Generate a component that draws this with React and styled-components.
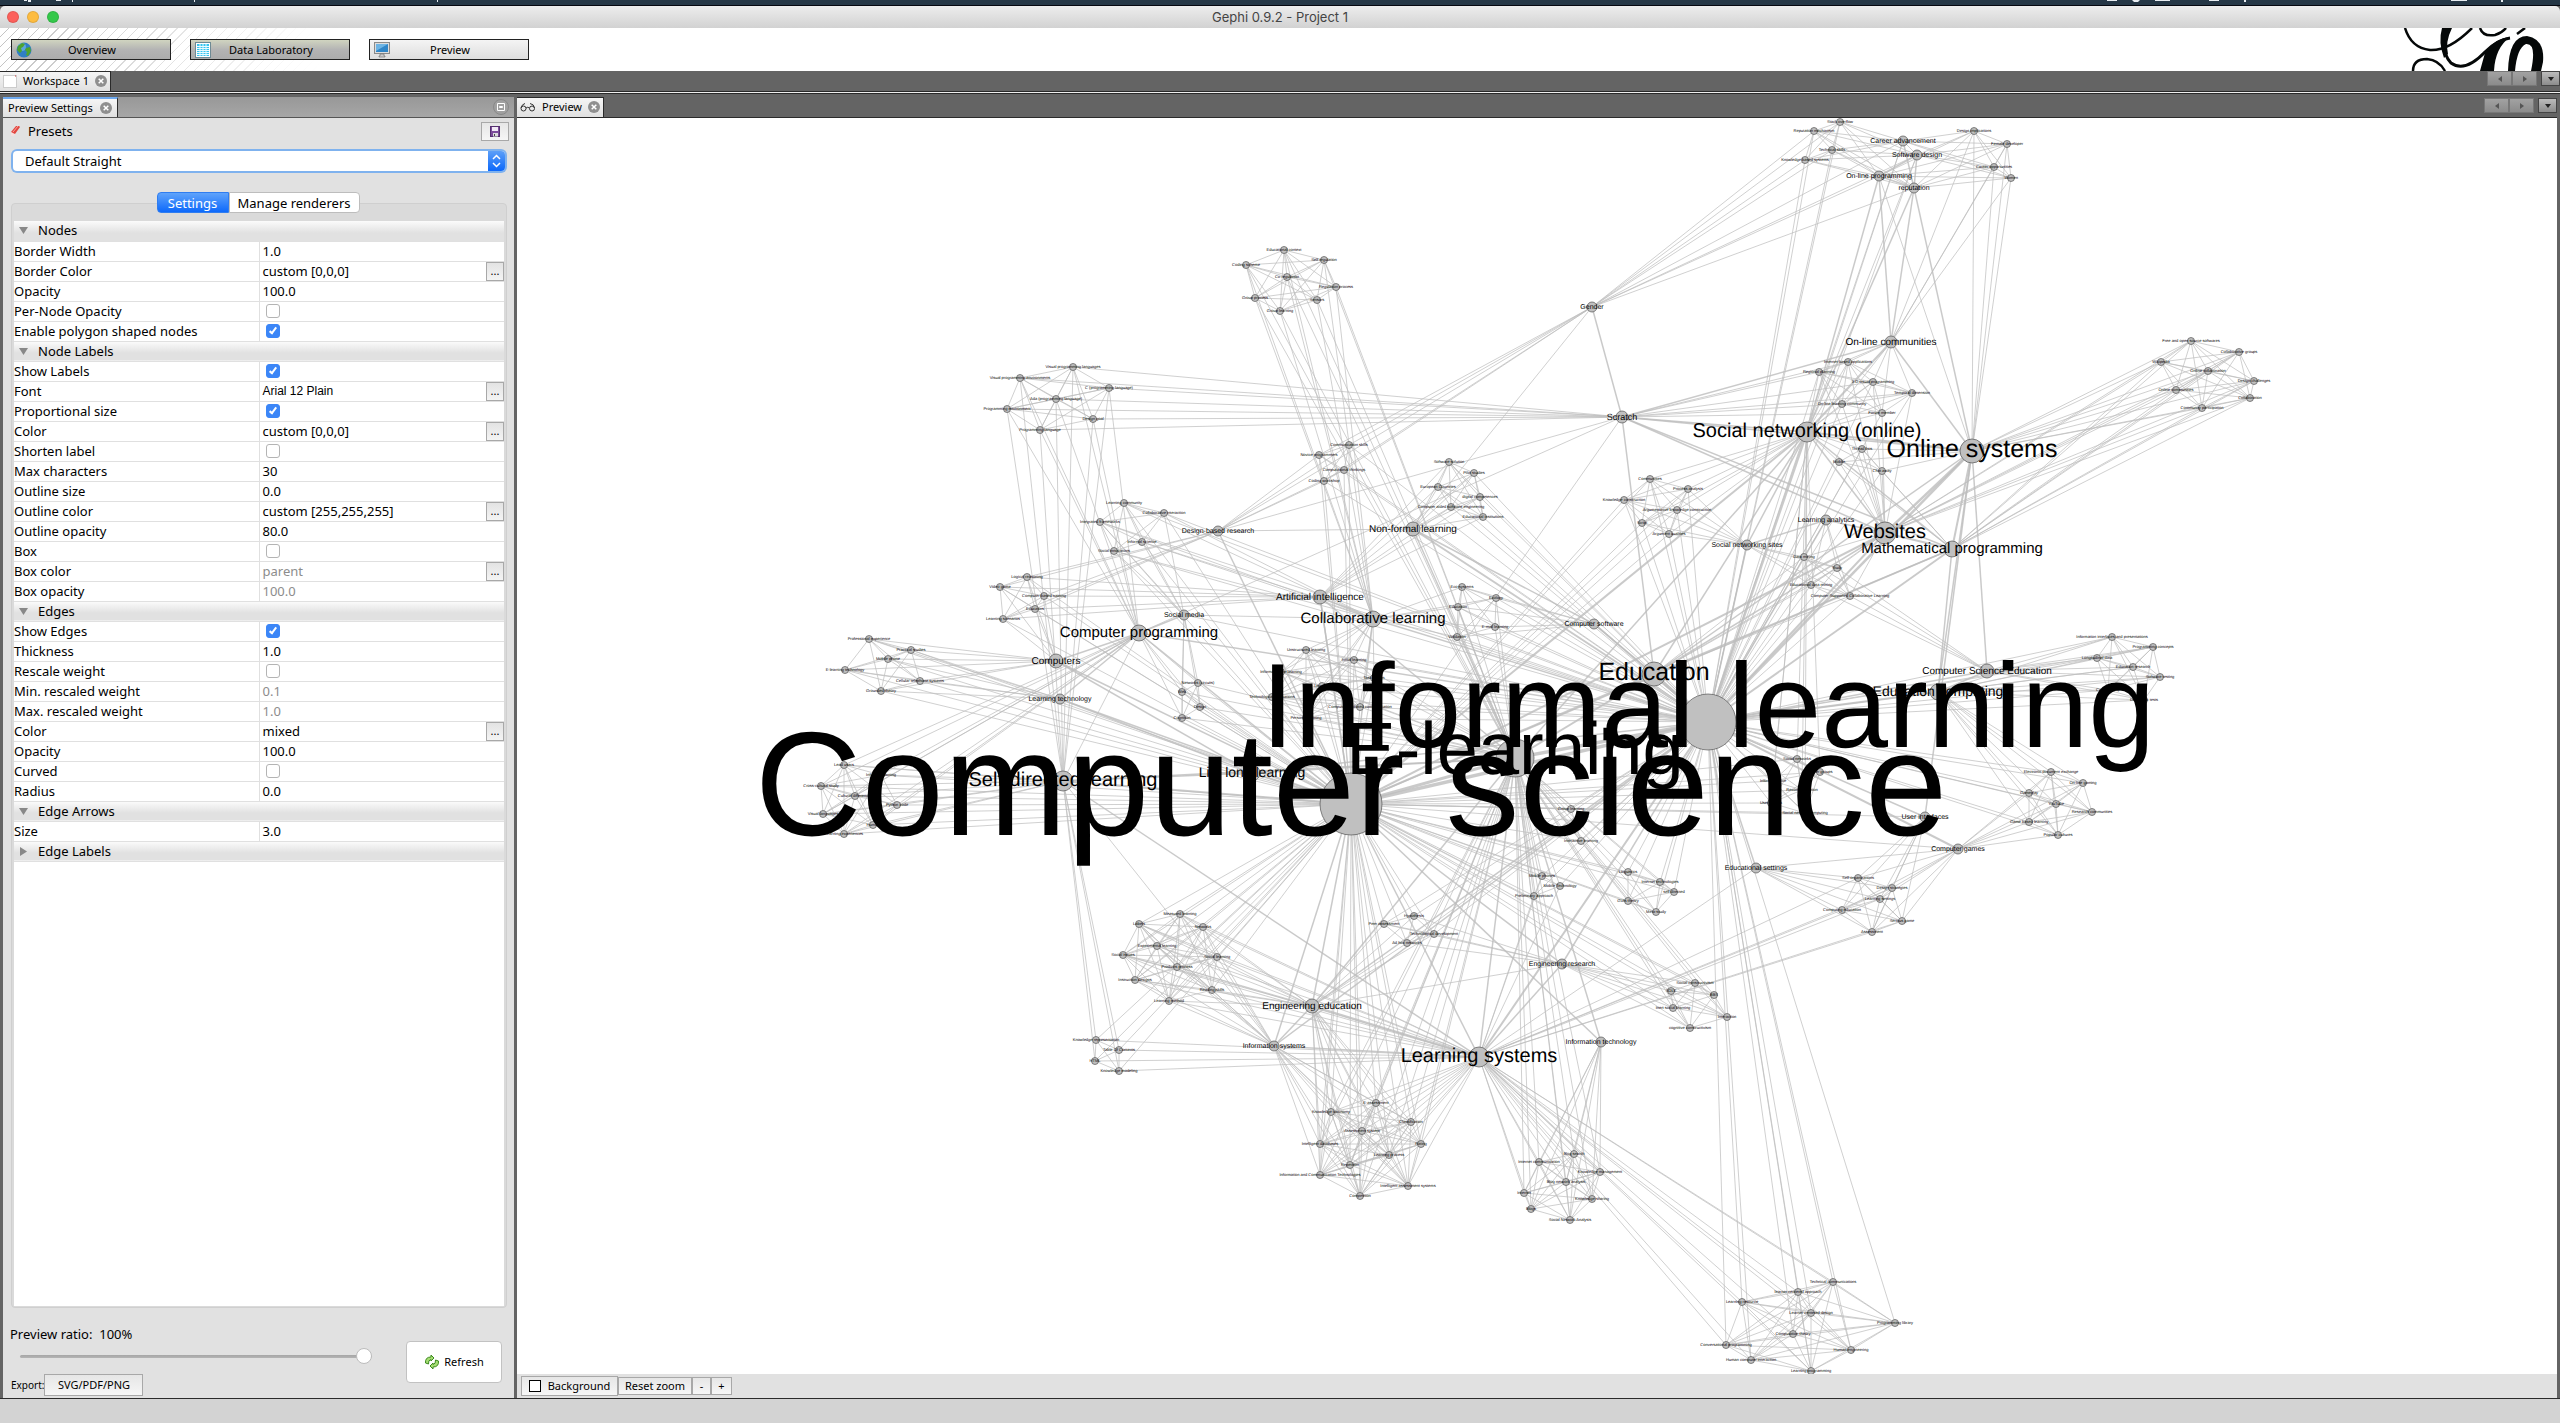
import React, { useState } from "react";
import styled, { createGlobalStyle, css } from "styled-components";

const UI = `"Noto Sans", "Open Sans", sans-serif`;

const GlobalStyle = createGlobalStyle`
  *, *::before, *::after { box-sizing: border-box; }
  body { margin: 0; background: #253746; }
  button, input, select { font: inherit; color: inherit; margin: 0; }
`;

/* ---------- window frame ---------- */

const Window = styled.div`
  display: flex;
  flex-direction: column;
  height: 100vh;
  overflow: hidden;
  font-family: ${UI};
  font-size: 13px;
  line-height: 20px;
  color: #000;
  background: #646464;
`;

const MenuStrip = styled.div`
  flex: none;
  height: 6px;
  background: #253746;
  border-bottom: 1px solid #05070f;
  svg { display: block; width: 100%; height: 5px; }
`;

const TitleBar = styled.header`
  flex: none;
  display: grid;
  grid-template-columns: 1fr auto 1fr;
  align-items: center;
  height: 22px;
  padding: 0 7px;
  background: linear-gradient(#ededed, #d2d2d2);
  border-radius: 5px 5px 0 0;
`;

const Lights = styled.div`
  display: flex;
  gap: 8px;
`;

const Light = styled.button`
  width: 12px;
  height: 12px;
  padding: 0;
  border: 1px solid rgba(0, 0, 0, 0.1);
  border-radius: 50%;
  background: ${(p) => p.$color};
`;

const Title = styled.h1`
  margin: 0;
  font-family: Inter, sans-serif;
  font-size: 13px;
  font-weight: 400;
  line-height: 20px;
  color: #444;
`;

const Banner = styled.nav`
  flex: none;
  display: flex;
  gap: 19px;
  align-items: center;
  height: 43px;
  padding-left: 11px;
  background:
    linear-gradient(90deg, rgba(255, 255, 255, 0) 0, #fff 320px),
    repeating-linear-gradient(135deg, #fff 0 6px, #c4c4c4 6px 7px);
`;

const ModeButton = styled.button`
  display: grid;
  grid-template-columns: 16px 1fr 14px;
  align-items: center;
  width: 160px;
  height: 21px;
  padding: 0 4px;
  border: 1px solid #222;
  background: ${(p) => (p.$active ? "linear-gradient(#f4f4f4, #dedede)" : "linear-gradient(#d0d4c0, #b4b4b4 50%, #acacac)")};
  font-size: 11px;
  line-height: 18px;
  svg { width: 16px; height: 16px; display: block; }
`;

const Logo = styled.svg`
  width: 142px;
  height: 43px;
  margin-left: auto;
  margin-right: 15px;
`;

const Strip = styled.div`
  flex: none;
  display: flex;
  align-items: flex-start;
  justify-content: space-between;
  height: ${(p) => p.$height}px;
  padding-right: ${(p) => p.$right || 0}px;
  background: #646464;
  border-bottom: 1px solid #2a2a2a;
`;

const Groove = styled.div`
  flex: none;
  height: 5px;
  border-top: 1px solid #f0f0f0;
  background: linear-gradient(#2a2a2a 0 1px, #646464 1px);
`;

const Tab = styled.div`
  display: flex;
  align-items: center;
  gap: ${(p) => p.$gap || 4}px;
  height: 20px;
  padding: 0 ${(p) => p.$pad || 4}px 1px;
  border: 1px solid #2a2a2a;
  border-width: 1px 1px 0 0;
  background: linear-gradient(#f5f5f5, #e0e0e0);
  font-size: 11px;
  line-height: 16px;
  white-space: nowrap;
  ${(p) => p.$focused && css`border-top: 2px solid #6ea9ee;`}
  svg { flex: none; }
`;

const CloseButton = styled.button`
  flex: none;
  display: grid;
  place-items: center;
  width: 12px;
  height: 12px;
  padding: 0;
  border: 0;
  border-radius: 50%;
  background: #8f8f8f;
`;

const Pager = styled.div`
  display: flex;
  padding-top: ${(p) => p.$top || 0}px;
`;

const PagerButton = styled.button`
  display: grid;
  place-items: center;
  width: ${(p) => (p.$menu ? 19 : 25)}px;
  height: 15px;
  padding: 0;
  margin-left: ${(p) => (p.$menu ? 4 : 0)}px;
  border: 1px solid ${(p) => (p.$menu ? "#444" : "#777")};
  background: ${(p) => (p.$menu ? "linear-gradient(#bcbcbc, #8c8c8c)" : "linear-gradient(#a2a2a2, #8b8b8b)")};
`;

const Workspace = styled.main`
  flex: 1;
  min-height: 0;
  display: grid;
  grid-template-columns: 511px minmax(0, 1fr);
  gap: 3px;
  padding: 0 3px;
`;

const StatusBar = styled.footer`
  flex: none;
  height: 25px;
  border-top: 1px solid #2a2a2a;
  background: #d3d3d3;
`;

/* ---------- settings panel ---------- */

const Panel = styled.section`
  display: flex;
  flex-direction: column;
  min-width: 0;
  min-height: 0;
  background: #e1e1e1;
`;

const PanelHeader = styled(Strip)`
  background: linear-gradient(#989898, #a6a6a6);
  border-bottom-color: #555;
  align-items: center;
`;

const MinimizeButton = styled.button`
  display: grid;
  place-items: center;
  width: 16px;
  height: 16px;
  padding: 0;
  border: 1px solid #888;
  border-radius: 50%;
  background: #a0a0a0;
`;

const PresetRow = styled.div`
  display: flex;
  align-items: center;
  height: 25px;
  gap: 7px;
  padding: 1px 5px 0 7px;
`;

const PresetTitle = styled.h2`
  flex: 1;
  margin: 0;
  font-size: 13px;
  font-weight: 400;
`;

const FlatButton = styled.button`
  display: flex;
  align-items: center;
  justify-content: center;
  gap: 7px;
  height: ${(p) => p.$height}px;
  min-width: ${(p) => p.$width}px;
  padding: 0 ${(p) => p.$pad || 0}px;
  border: 1px solid #a8a8a8;
  background: linear-gradient(#e6e6e6, #f6f6f6);
  font-size: 11px;
  line-height: 16px;
  white-space: nowrap;
`;

const SelectBox = styled.div`
  position: relative;
  margin: 8px 9px 0 10px;
  height: 20px;
  border-radius: 4px;
  box-shadow: 0 0 0 2px #7fb2ee;
  background: #fff;
  select {
    width: 100%;
    height: 20px;
    padding: 0 24px 0 12px;
    border: 0;
    border-radius: 4px;
    outline: 0;
    appearance: none;
    background: transparent;
  }
  svg {
    position: absolute;
    top: 0;
    right: 0;
    pointer-events: none;
  }
`;

const TabBox = styled.div`
  flex: 1;
  min-height: 0;
  display: flex;
  flex-direction: column;
  margin: 21px 7px 0 8px;
`;

const Segments = styled.div`
  display: flex;
  justify-content: center;
  position: relative;
  z-index: 1;
  padding-right: 2px;
  margin-bottom: -10px;
`;

const Segment = styled.button`
  height: 21px;
  width: ${(p) => p.$width}px;
  padding: 0;
  border: 1px solid ${(p) => (p.$active ? "#2f7df0" : "#bdbdbd")};
  border-radius: ${(p) => (p.$active ? "4px 0 0 4px" : "0 4px 4px 0")};
  background: ${(p) => (p.$active ? "linear-gradient(#5fa3fb, #0d69fb)" : "#fff")};
  color: ${(p) => (p.$active ? "#fff" : "#000")};
  line-height: 18px;
`;

const Sheet = styled.div`
  flex: 1;
  min-height: 0;
  padding: 17px 2px 1px;
  border: 1px solid #cfcfcf;
  border-radius: 4px;
  background: #dadada;
  display: flex;
`;

const SheetBody = styled.div`
  flex: 1;
  background: #fff;
`;

const Properties = styled.table`
  width: 100%;
  table-layout: fixed;
  border-collapse: collapse;
  th, td {
    height: 20px;
    padding: 0;
    font-weight: 400;
    text-align: left;
    line-height: 19px;
    border-bottom: 1px solid #e0e0e0;
    white-space: nowrap;
  }
`;

const GroupCell = styled.th`
  background: linear-gradient(#fbfbfb, #e1e1e1 60%);
  div { display: flex; align-items: center; gap: 10px; padding-left: 5px; height: 19px; }
`;

const ValueCell = styled.td`
  border-left: 1px solid #e0e0e0;
  color: ${(p) => (p.$muted ? "#8c8c8c" : "#000")};
  font-family: ${(p) => (p.$arial ? `"Liberation Sans", Arial, sans-serif` : UI)};
  font-size: ${(p) => (p.$arial ? 12 : 13)}px;
  > div {
    display: flex;
    align-items: center;
    justify-content: space-between;
    height: 19px;
    padding-left: 3px;
  }
`;

const MoreButton = styled.button`
  width: 18px;
  height: 19px;
  padding: 0;
  border: 1px solid #a8a8a8;
  background: linear-gradient(#e3e3e3, #f4f4f4);
  font-family: ${UI};
  font-size: 11px;
  line-height: 16px;
  color: #000;
`;

const Check = styled.input`
  appearance: none;
  width: 14px;
  height: 14px;
  margin-left: 3px;
  border: 1px solid #b4b4b4;
  border-radius: 3px;
  background: #fff;
  &:checked {
    border-color: #3b86f7;
    background: #3b86f7;
  }
  &:checked::after {
    content: "";
    display: block;
    width: 4px;
    height: 8px;
    margin: 1px auto 0;
    border: solid #fff;
    border-width: 0 2px 2px 0;
    transform: rotate(38deg);
  }
`;

const Footer = styled.div`
  flex: none;
  display: grid;
  grid-template-columns: minmax(0, 1fr) 96px;
  padding: 15px 12px 0 7px;
  height: 90px;
`;

const FooterLeft = styled.div`
  display: flex;
  flex-direction: column;
  label { line-height: 22px; }
`;

const Ratio = styled.input`
  appearance: none;
  width: 352px;
  height: 16px;
  margin: 3px 0 0 10px;
  background: transparent;
  &::-webkit-slider-runnable-track {
    height: 3px;
    border-radius: 2px;
    background: linear-gradient(#a6a6a6, #b4b4b4);
  }
  &::-webkit-slider-thumb {
    appearance: none;
    width: 16px;
    height: 16px;
    margin-top: -7px;
    border: 1px solid #bcbcbc;
    border-radius: 50%;
    background: #fff;
  }
`;

const ExportRow = styled.div`
  display: flex;
  align-items: center;
  margin-top: 10px;
  padding-left: 1px;
  font-size: 10px;
`;

const RefreshButton = styled.button`
  display: flex;
  align-items: center;
  justify-content: center;
  gap: 4px;
  height: 42px;
  margin-top: 18px;
  padding: 0;
  border: 1px solid #c2c2c2;
  border-radius: 4px;
  background: #fff;
  font-size: 11px;
`;

/* ---------- preview panel ---------- */

const Canvas = styled.div`
  flex: 1;
  min-height: 0;
  background: #fff;
  svg { display: block; width: 100%; height: 100%; }
  text {
    font-family: "Liberation Sans", Arial, sans-serif;
    text-anchor: middle;
    text-rendering: geometricPrecision;
  }
`;

const CanvasTools = styled.div`
  flex: none;
  display: flex;
  align-items: center;
  height: 24px;
  padding-left: 4px;
`;

const Swatch = styled.span`
  width: 12px;
  height: 12px;
  border: 1px solid #000;
  background: #fff;
`;

/* ---------- icons ---------- */

const Globe = () => (
  <svg viewBox="0 0 16 16">
    <circle cx="8" cy="8" r="7.5" fill="#2f7fc4" />
    <circle cx="6" cy="5" r="4" fill="#7cc0ee" opacity=".6" />
    <path d="M2 4l4-3 3 1-2 3-2 1 1 3-2 2-3-3zM10 6l4-1 1 4-3 5-2-1 1-3-2-2z" fill="#4ea32f" />
  </svg>
);
const Grid = () => (
  <svg viewBox="0 0 16 16">
    <rect x=".5" y=".5" width="15" height="15" fill="#fff" stroke="#6e8a94" />
    <rect x="2" y="2" width="12" height="12" fill="#35c4ee" />
    <path d="M2 4.500h12M2 6.500h12M2 8.500h12M2 10.500h12M2 12.500h12M5 2v12M8 2v12M11 2v12" stroke="#e9fbff" strokeWidth="1" />
  </svg>
);
const Monitor = () => (
  <svg viewBox="0 0 16 16">
    <rect x=".5" y=".5" width="15" height="11" fill="#ddd" stroke="#8a8a8a" />
    <rect x="2" y="2" width="12" height="8" fill="#2f86c8" />
    <path d="M2 2h12L2 9z" fill="#6db4e4" />
    <path d="M6 12h4v2h1v1H5v-1h1z" fill="#ccc" stroke="#777" strokeWidth=".7" />
  </svg>
);
const Cross = () => (
  <svg width="6" height="6" viewBox="0 0 6 6"><path d="M.7.7l4.600 4.600M5.300.7L.7 5.300" stroke="#fff" strokeWidth="1.500" /></svg>
);
const Arrow = ({ dir, fill = "#555" }) => (
  <svg width="6" height="6" viewBox="0 0 6 6">
    <path d={{ left: "M5 0v6L1 3z", right: "M1 0v6l4-3z", down: "M0 1h6L3 5z" }[dir]} fill={fill} />
  </svg>
);
const Twisty = ({ open }) => (
  <svg width="9" height="9" viewBox="0 0 9 9"><path d={open ? "M0 1h9L4.500 8z" : "M1 0v9l7-4.500z"} fill="#888" /></svg>
);
const Glasses = () => (
  <svg width="16" height="10" viewBox="0 0 16 10" fill="none" stroke="#333">
    <circle cx="3.500" cy="6.500" r="2.500" /><circle cx="12" cy="6.500" r="2.500" />
    <path d="M6 6q1.700-1.500 3.500 0M1 6Q2 2 5 1.500M14.500 6Q14 2 10 1.500" />
  </svg>
);
const Eraser = () => (
  <svg width="11" height="12" viewBox="0 0 11 12">
    <path d="M1 7l5-6h3l1 1-5 7H2z" fill="#e2463f" /><path d="M3 7l5-6" stroke="#f7a49e" /><path d="M1 7l4 2-1 2H1z" fill="#f5dede" />
  </svg>
);
const Floppy = () => (
  <svg width="10" height="11" viewBox="0 0 10 11">
    <rect x=".5" y=".5" width="9" height="10" fill="#7c4c9b" stroke="#54306e" />
    <rect x="2" y="1" width="6" height="4" fill="#f2eaf6" /><rect x="3" y="7" width="5" height="3.500" fill="#ddd" /><rect x="4" y="8" width="1" height="2" fill="#444" />
  </svg>
);
const RefreshIcon = () => (
  <svg width="16" height="16" viewBox="0 0 16 16" fill="#a5dd72" stroke="#3c8a1e">
    <path d="M7 1l3 3-3 3V5.500Q4 6 4.500 10L1.500 9Q1 3 7 3z" /><path d="M9 15l-3-3 3-3v1.500q3-.5 2.500-4.500l3 1q.5 6-5.500 6z" />
  </svg>
);
const Stepper = () => (
  <svg width="17" height="20" viewBox="0 0 17 20">
    <defs><linearGradient id="stepper" x2="0" y2="1"><stop stopColor="#5c9ff8" /><stop offset="1" stopColor="#0c68fa" /></linearGradient></defs>
    <path d="M0 0h13q4 0 4 4v12q0 4-4 4H0z" fill="url(#stepper)" />
    <path d="M5 8l3.500-3.500L12 8M5 12l3.500 3.500L12 12" fill="none" stroke="#fff" strokeWidth="1.500" />
  </svg>
);

/* ---------- property data ---------- */

const groups = [
  ["Nodes", true, [
    ["Border Width", "1.0"],
    ["Border Color", "custom [0,0,0]", "more"],
    ["Opacity", "100.0"],
    ["Per-Node Opacity", false],
    ["Enable polygon shaped nodes", true],
  ]],
  ["Node Labels", true, [
    ["Show Labels", true],
    ["Font", "Arial 12 Plain", "more", "arial"],
    ["Proportional size", true],
    ["Color", "custom [0,0,0]", "more"],
    ["Shorten label", false],
    ["Max characters", "30"],
    ["Outline size", "0.0"],
    ["Outline color", "custom [255,255,255]", "more"],
    ["Outline opacity", "80.0"],
    ["Box", false],
    ["Box color", "parent", "more", "muted"],
    ["Box opacity", "100.0", "", "muted"],
  ]],
  ["Edges", true, [
    ["Show Edges", true],
    ["Thickness", "1.0"],
    ["Rescale weight", false],
    ["Min. rescaled weight", "0.1", "", "muted"],
    ["Max. rescaled weight", "1.0", "", "muted"],
    ["Color", "mixed", "more"],
    ["Opacity", "100.0"],
    ["Curved", false],
    ["Radius", "0.0"],
  ]],
  ["Edge Arrows", true, [["Size", "3.0"]]],
  ["Edge Labels", false, []],
];

/* ---------- graph data ---------- */

// id: [label, x, y, radius, font size]
const hubs = {
  career: ["Career advancement", 1903, 141, 5, 7],
  swd: ["Software design", 1917, 155, 5, 7],
  olp: ["On-line programming", 1879, 176, 5, 7],
  rep: ["reputation", 1914, 188, 5, 7],
  gender: ["Gender", 1592, 307, 5, 7],
  scratch: ["Scratch", 1622, 417, 6, 9],
  comm: ["On-line communities", 1891, 342, 6, 10],
  sno: ["Social networking (online)", 1807, 432, 10, 20],
  os: ["Online systems", 1972, 451, 12, 25],
  web: ["Websites", 1885, 533, 11, 20],
  math: ["Mathematical programming", 1952, 549, 8, 15],
  la: ["Learning analytics", 1826, 520, 5, 7],
  sns: ["Social networking sites", 1747, 545, 5, 7],
  dbr: ["Design-based research", 1218, 531, 5, 7],
  nfl: ["Non-formal learning", 1413, 529, 7, 10],
  ai: ["Artificial intelligence", 1320, 597, 7, 10],
  cl: ["Collaborative learning", 1373, 619, 8, 15],
  sm: ["Social media", 1184, 615, 5, 7],
  cp: ["Computer programming", 1139, 633, 8, 15],
  pcs: ["Computers", 1056, 661, 7, 10],
  lt: ["Learning technology", 1060, 699, 5, 7],
  csw: ["Computer software", 1594, 624, 5, 7],
  edu: ["Education", 1654, 674, 12, 25],
  cse: ["Computer Science Education", 1987, 671, 7, 10],
  ec: ["Education computing", 1938, 692, 8, 14],
  sdl: ["Self-directed learning", 1063, 781, 10, 20],
  ll: ["Life long learning", 1252, 773, 8, 14],
  ui: ["User interfaces", 1925, 817, 5, 7],
  cg: ["Computer games", 1958, 849, 5, 7],
  es: ["Educational settings", 1756, 868, 5, 7],
  er: ["Engineering research", 1562, 964, 5, 7],
  ee: ["Engineering education", 1312, 1006, 7, 10],
  is: ["Information systems", 1274, 1046, 5, 7],
  it: ["Information technology", 1601, 1042, 5, 7],
  ls: ["Learning systems", 1479, 1057, 10, 20],
  el: ["E-learning", 1515, 758, 19, 74],
  il: ["Informal learning", 1708, 722, 28, 120],
  cs: ["Computer science", 1351, 804, 31, 148],
};

// members of one cluster are all linked to each other and to its hubs
const clusters = [
  [["career", "swd", "olp", "rep", "gender", "il"], [["Stack overflow", 1840, 122], ["Reputation mechanism", 1814, 131], ["Technical skills", 1832, 150], ["Knowledge based systems", 1805, 160]]],
  [["career", "swd", "olp", "rep", "os", "comm"], [["Design implications", 1974, 131], ["Female developer", 2007, 144], ["Career opportunities", 1994, 167], ["Women", 2011, 178]]],
  [["comm", "sno", "scratch", "web", "il"], [["Internet-based applications", 1848, 362], ["Regional planning", 1819, 372], ["3-D visual programming", 1873, 382], ["Temporal dimension", 1912, 393], ["On-line learning community", 1842, 404], ["Forum member", 1882, 413]]],
  [["os", "sno", "web", "math", "il"], [["Thread lists", 1862, 449], ["Mobile", 1839, 462], ["Chat away", 1882, 471]]],
  [["la", "sns", "web", "il", "cse", "edu"], [["Data mining", 1804, 557], ["Study", 1837, 568], ["Educational data mining", 1811, 585], ["Computer-Supported Collaborative Learning", 1850, 596]]],
  [["os", "web", "math"], [["Free and open source softwares", 2191, 341], ["Collaborative groups", 2239, 352], ["Wikipedia", 2161, 362], ["Online collaboration", 2208, 371], ["Design challenges", 2254, 381], ["Online communities", 2176, 390], ["Collaboration", 2250, 398], ["Community participation", 2202, 408]]],
  [["sns", "sno", "il", "cs"], [["Communities", 1650, 479], ["Process analysis", 1688, 489], ["Knowledge construction", 1624, 500], ["Argumentative knowledge construction", 1677, 510], ["Script", 1642, 523], ["Argument qualities", 1669, 534]]],
  [["cl", "el"], [["Educational context", 1284, 250], ["Self regulation", 1324, 260], ["Coding scheme", 1246, 265], ["Co-regulation", 1287, 277], ["Regulation process", 1336, 287], ["Group process", 1255, 298], ["Sensors", 1317, 300], ["Group learning", 1280, 311]]],
  [["scratch", "cp", "sdl"], [["Visual programming languages", 1073, 367], ["Visual programming environments", 1020, 378], ["C (programming language)", 1109, 388], ["Ada (programming language)", 1056, 399], ["Programming environment", 1007, 409], ["Design goal", 1093, 419], ["Programming language", 1040, 430]]],
  [["gender", "dbr", "il", "cs"], [["Communication skills", 1349, 445], ["Novice programmers", 1319, 455], ["Computational thinkings", 1344, 470], ["Coding workshop", 1324, 481]]],
  [["nfl", "ai", "il"], [["Software solution", 1449, 462], ["Pilot studies", 1474, 473], ["European Countries", 1438, 487], ["digital competences", 1480, 497], ["Computer aided software engineering", 1451, 507], ["Educational institutions", 1483, 517]]],
  [["cl", "sm", "il", "cs"], [["Learning community", 1124, 503], ["Collaborative interaction", 1164, 513], ["Integrated frameworks", 1100, 522], ["Informal science", 1142, 542], ["Social innovations", 1114, 551]]],
  [["dbr", "ai", "pcs", "cs"], [["Logical reasoning", 1027, 577], ["Video game", 1000, 587], ["Computer based training", 1044, 596], ["Educators", 1035, 609], ["Learning scenarios", 1003, 619]]],
  [["il", "csw", "el", "cl"], [["Eco-systems", 1462, 587], ["Ecology", 1496, 598], ["Education", 1458, 607], ["E-mail learning", 1495, 627], ["Validation", 1457, 637]]],
  [["cl", "il", "el", "cs"], [["Unstructured learning", 1306, 650], ["Initial learning", 1354, 660], ["Informal online learning", 1281, 672], ["Task design", 1374, 678], ["Learning", 1322, 686], ["Technological innovations", 1272, 697], ["Computer-mediated communication", 1360, 707], ["Personal learning", 1306, 718]]],
  [["sm", "cp", "cs", "el"], [["Networks (circuits)", 1198, 683], ["Web", 1182, 692], ["Design", 1200, 707], ["Cognition", 1182, 718]]],
  [["pcs", "lt", "cs"], [["Professional experience", 869, 639], ["Practical studies", 911, 650], ["Mobile phone", 888, 659], ["E-learning technology", 845, 670], ["Cellular telephone systems", 920, 681], ["Grounded theory", 881, 691]]],
  [["sdl", "cs", "cp"], [["Lead users", 844, 765], ["Informal learning", 881, 775], ["Cross-cultural study", 821, 786], ["Cultural differences", 855, 796], ["Python code", 897, 805], ["Visual languages", 823, 814], ["Human", 873, 825], ["Learning experiences", 844, 834]]],
  [["cse", "ec", "il"], [["Information interfaces and presentations", 2112, 637], ["Programming concepts", 2153, 647], ["Longitudinal data", 2097, 658], ["Education research", 2133, 667], ["Software testing", 2160, 677], ["Concept map", 2108, 690], ["Diagnostic tests", 2144, 700]]],
  [["il", "sno", "cs"], [["Social networks", 1797, 759], ["Twitter groups", 1820, 772], ["Informal notice", 1773, 781], ["Recommendation", 1802, 790], ["User studies", 1771, 803], ["Social network computing", 1805, 813]]],
  [["cg", "il", "ec"], [["Electronic document exchange", 2051, 772], ["On-line gaming", 2083, 783], ["Gameplay", 2029, 793], ["YouTube", 2056, 804], ["Research communities", 2092, 812], ["Game based learning", 2029, 822], ["Popular cultures", 2058, 835]]],
  [["cg", "es", "ui", "ls"], [["Self-organizations", 1858, 878], ["Design strategies", 1892, 888], ["Learning settings", 1880, 899], ["Computing education", 1842, 910], ["Serious game", 1902, 921], ["Assessment", 1872, 932]]],
  [["el", "il", "cs"], [["Linguistics", 1628, 872], ["Internet technologies", 1660, 882], ["self directed", 1674, 892], ["GUIs theory", 1628, 901], ["Meta-study", 1656, 912]]],
  [["el", "il", "cs"], [["Group learning", 1571, 809], ["Interactive learning", 1581, 841]]],
  [["el", "il", "cs", "ls"], [["Mobile phones", 1542, 876], ["Mobile Technology", 1560, 886], ["Preliminary approach", 1534, 896]]],
  [["er", "il", "cs", "ee"], [["Hypothesis", 1414, 916], ["Peer assessment", 1384, 924], ["Technological development", 1434, 934], ["Ad hoc networks", 1407, 943]]],
  [["ee", "is", "cs", "ls"], [["Measured learning", 1180, 914], ["Labels", 1139, 924], ["Networks", 1203, 927], ["Experimental learning", 1157, 946], ["Social issues", 1123, 955], ["Social learning", 1217, 957], ["Products process", 1177, 967], ["Instruction designs", 1135, 980], ["Reading skills", 1212, 990], ["Learning method", 1169, 1001]]],
  [["ls", "sdl", "cs"], [["Knowledge representation", 1096, 1040], ["Table Of Contents", 1119, 1050], ["HTML", 1095, 1061], ["Knowledge modeling", 1119, 1071]]],
  [["er", "cs", "el"], [["Social constructivism", 1695, 983], ["SOLE", 1671, 991], ["BBS", 1714, 995], ["Inert social learning", 1673, 1008], ["Interaction", 1727, 1017], ["cognitive constructivism", 1690, 1028]]],
  [["ee", "is", "ls", "el", "cs"], [["E-assessment", 1376, 1103], ["Knowledge taxonomy", 1331, 1112], ["Classification", 1411, 1122], ["Assessment system", 1362, 1131], ["Intelligent databases", 1320, 1144], ["Rating", 1421, 1144], ["Learning process", 1389, 1155], ["Repetition", 1350, 1165], ["Information and Communication Technologies", 1320, 1175], ["Intelligent assessment systems", 1408, 1186], ["Competition", 1360, 1196]]],
  [["ls", "it", "el"], [["Blog search", 1574, 1154], ["Internet communication", 1539, 1162], ["Knowledge management", 1600, 1172], ["Blog network analysis", 1566, 1182], ["Internet", 1524, 1193], ["Knowledge sharing", 1592, 1199], ["Blogs", 1531, 1209], ["Social Network Analysis", 1570, 1220]]],
  [["il", "ls"], [["Technical communications", 1833, 1282], ["learner centered approach", 1798, 1292], ["Learning resource", 1742, 1302], ["Learner centered design", 1811, 1313], ["Programming library", 1895, 1323], ["Computation theory", 1793, 1334], ["Conversational programming", 1726, 1345], ["Human engineering", 1851, 1350], ["Human computer interaction", 1751, 1360], ["Learning programming", 1811, 1371]]],
];

// "from to weight" for links between hubs
const hubLinks = (
  "cs il 6,cs el 5,el il 6,cs ls 2,il ls 3,el ls 2,cs sdl 3,cs ll 3,cs lt 2,cs pcs 2,cs cp 2,cs ai 2,cs cl 2,cs edu 3,il edu 5," +
  "el edu 3,il cl 2,il nfl 3,el nfl 2,il ec 3,il cse 2,ec cse 2,il web 3,il os 4,il sno 4,web os 4,web sno 2,web math 3,os math 3,os comm 2," +
  "sno comm 3,sno os 3,sno math 2,cs web 3,cs sno 3,edu os 2,edu web 2,edu sno 2,el sno 2,edu math 2,math il 3,math cs 2,scratch sno 2," +
  "scratch os 2,scratch comm 2,scratch web 2,scratch math 2,scratch gender 2,scratch edu 2,scratch cs 1,scratch cp 1,scratch dbr 1," +
  "il cg 3,il es 2,il ui 2,cs cg 1,ui os 2,cs ui 1,es cg 1,cs er 2,il er 2,er ls 2,cs ee 2,el ee 2,il ee 2,ee ls 3,is ls 2,ee is 2,cs is 2,il is 2," +
  "cs it 2,el it 2,ls sdl 2,cp il 2,cp pcs 2,cp lt 2,cp sdl 1,cp sm 2,pcs ll 2,lt ll 2,cs dbr 2,dbr nfl 1,ai cl 2,ai el 2,ai cs 2,nfl csw 2," +
  "csw edu 2,csw il 2,sm il 1,sm cl 1,sns la 2,sns il 2,sns sno 2,la il 2,la web 2,os cse 2,os ec 2,math ec 2,gender dbr 1,gender nfl 1," +
  "ll el 2,ll il 2,ee er 1,es ls 1,sdl ll 2,sdl el 2,sdl is 1,olp comm 2,rep comm 2,swd sno 1,career sno 1,olp sno 2,rep sno 2,rep os 2," +
  "olp os 1,swd il 1,career il 1,olp swd 2,rep swd 2,olp rep 2,career swd 1,career rep 2,career gender 1,swd gender 1,olp gender 1,rep gender 1"
).split(",").map((s) => s.split(" "));

const edges = [];
const addEdge = (x1, y1, x2, y2, w) => edges.push({ x1, y1, x2, y2, w });
clusters.forEach(([links, members]) => {
  members.forEach(([, x, y], i) => {
    members.slice(i + 1).forEach(([, a, b]) => addEdge(x, y, a, b, 1));
    links.forEach((id) => addEdge(x, y, hubs[id][1], hubs[id][2], 1));
  });
});
hubLinks.forEach(([a, b, w]) => addEdge(hubs[a][1], hubs[a][2], hubs[b][1], hubs[b][2], Number(w)));

const nodes = [
  ...clusters.flatMap(([, members]) => members.map(([label, x, y]) => [label, x, y, 4, 4])),
  ...Object.values(hubs),
];

const Graph = () => (
  <svg viewBox="517 118 2040 1256" role="img" aria-label="Network preview">
    <g stroke="#bdbdbd" strokeOpacity=".8">
      {edges.map((e, i) => (
        <line key={i} x1={e.x1} y1={e.y1} x2={e.x2} y2={e.y2} strokeWidth={e.w > 1 ? 0.5 + e.w * 0.5 : 0.9} />
      ))}
    </g>
    <g fill="#c0c0c0" stroke="#555" strokeWidth=".7">
      {nodes.map(([, x, y, r], i) => <circle key={i} cx={x} cy={y} r={r > 4 ? r : 3.5} />)}
    </g>
    <g>
      {nodes.map(([label, x, y, , size], i) => (
        <text key={i} x={x} y={y + (size > 4 ? Math.round(size * 0.2 + 1) : 1)} fontSize={size}>{label}</text>
      ))}
    </g>
  </svg>
);

/* ---------- page ---------- */

const Close = ({ label }) => <CloseButton aria-label={label}><Cross /></CloseButton>;

const Paging = ({ top }) => (
  <Pager $top={top}>
    <PagerButton aria-label="Scroll left"><Arrow dir="left" /></PagerButton>
    <PagerButton aria-label="Scroll right"><Arrow dir="right" /></PagerButton>
    <PagerButton $menu aria-label="Show list"><Arrow dir="down" fill="#222" /></PagerButton>
  </Pager>
);

const PropertyRow = ({ row: [name, value, more, look] }) => (
  <tr>
    <th scope="row">{name}</th>
    <ValueCell $muted={look === "muted"} $arial={look === "arial"}>
      <div>
        {typeof value === "boolean" ? <Check type="checkbox" defaultChecked={value} aria-label={name} /> : <span>{value}</span>}
        {more && <MoreButton aria-label={`Edit ${name}`}>...</MoreButton>}
      </div>
    </ValueCell>
  </tr>
);

export default function App() {
  const [ratio, setRatio] = useState(100);
  return (
    <Window>
      <GlobalStyle />
      <MenuStrip>
        <svg fill="#e8edf2">
          <path d="M24 0h3v1h-3zM28 0h3v2h-3zM56 0h5v1h-5zM72 0h1v2h-1zM194 0h1v2h-1zM437 0h1v2h-1zM2107 0h10v1h-10zM2132 0h8l-2 2h-4zM2155 0h15v1h-15zM2209 0h10v1h-10zM2244 0h2v2h-2zM2451 0h16v1h-16zM2501 0h2v2h-2z" />
        </svg>
      </MenuStrip>
      <TitleBar>
        <Lights>
          <Light $color="#fc605b" aria-label="Close" />
          <Light $color="#fdbc40" aria-label="Minimize" />
          <Light $color="#34c84a" aria-label="Zoom" />
        </Lights>
        <Title>Gephi 0.9.2 - Project 1</Title>
      </TitleBar>
      <Banner>
        <ModeButton><Globe /><span>Overview</span></ModeButton>
        <ModeButton><Grid /><span>Data Laboratory</span></ModeButton>
        <ModeButton $active><Monitor /><span>Preview</span></ModeButton>
        <Logo viewBox="0 0 142 43" fill="none" stroke="#050808">
          <path d="M2 0Q8 20 27 22Q46 23 69 0M10 43Q10 31 24 31Q36 32 42 43" strokeWidth="2.500" />
          <path d="M45 0Q36 22 48 35Q62 45 82 24Q94 12 107 10" strokeWidth="3" />
          <path d="M39 0h10Q42 14 45 26L41 30Q35 14 39 0z" fill="#050808" stroke="none" />
          <path d="M107 9Q92 20 91 43H77Q80 32 82 25Q92 10 107 9z" fill="#050808" stroke="none" />
          <path d="M77 0Q80 9 92 7Q99 5 103 0M114 6l8-6" strokeWidth="2.500" />
          <path d="M105 43Q106 8 124 8Q142 11 140 34L138 43H128Q134 15 123 16Q114 20 112 43z" fill="#050808" stroke="none" />
        </Logo>
      </Banner>
      <Strip $height={21}>
        <Tab $gap={6} $pad={3}>
          <svg width="14" height="13" viewBox="0 0 14 13"><rect x=".5" y=".5" width="13" height="12" fill="#fff" stroke="#ccc" /><path d="M12 1h1" stroke="#c33" /></svg>
          <span>Workspace 1</span>
          <Close label="Close workspace" />
        </Tab>
        <Paging />
      </Strip>
      <Groove />
      <Workspace>
        <Panel>
          <PanelHeader $height={21} $right={5}>
            <Tab $gap={7} $pad={5} $focused>
              <span>Preview Settings</span>
              <Close label="Close Preview Settings" />
            </Tab>
            <MinimizeButton aria-label="Minimize panel">
              <svg width="8" height="8" viewBox="0 0 8 8"><path d="M.5.5h7v7h-7zM2.500 3.500h3v1h-3z" fill="none" stroke="#fff" /></svg>
            </MinimizeButton>
          </PanelHeader>
          <PresetRow>
            <Eraser />
            <PresetTitle>Presets</PresetTitle>
            <FlatButton $height={19} $width={28} aria-label="Save preset"><Floppy /></FlatButton>
          </PresetRow>
          <SelectBox>
            <select aria-label="Preset" defaultValue="Default Straight"><option>Default Straight</option></select>
            <Stepper />
          </SelectBox>
          <TabBox>
            <Segments>
              <Segment $active $width={72}>Settings</Segment>
              <Segment $width={131}>Manage renderers</Segment>
            </Segments>
            <Sheet>
              <SheetBody>
                <Properties>
                  {groups.map(([name, open, rows]) => (
                    <tbody key={name}>
                      <tr><GroupCell colSpan={2} scope="rowgroup"><div><Twisty open={open} />{name}</div></GroupCell></tr>
                      {rows.map((row) => <PropertyRow key={row[0]} row={row} />)}
                    </tbody>
                  ))}
                </Properties>
              </SheetBody>
            </Sheet>
          </TabBox>
          <Footer>
            <FooterLeft>
              <label htmlFor="ratio">Preview ratio:&nbsp; {ratio}%</label>
              <Ratio id="ratio" type="range" min="0" max="100" value={ratio} onChange={(e) => setRatio(e.target.value)} />
              <ExportRow>
                <span>Export:</span>
                <FlatButton $height={22} $width={99}>SVG/PDF/PNG</FlatButton>
              </ExportRow>
            </FooterLeft>
            <RefreshButton><RefreshIcon />Refresh</RefreshButton>
          </Footer>
        </Panel>
        <Panel>
          <Strip $height={21} $right={0}>
            <Tab $gap={6} $pad={3}>
              <Glasses />
              <span>Preview</span>
              <Close label="Close Preview" />
            </Tab>
            <Paging top={1} />
          </Strip>
          <Canvas><Graph /></Canvas>
          <CanvasTools>
            <FlatButton $height={20} $width={97}><Swatch />Background</FlatButton>
            <FlatButton $height={18} $width={74}>Reset zoom</FlatButton>
            <FlatButton $height={18} $width={19}>-</FlatButton>
            <FlatButton $height={18} $width={21}>+</FlatButton>
          </CanvasTools>
        </Panel>
      </Workspace>
      <StatusBar />
    </Window>
  );
}
